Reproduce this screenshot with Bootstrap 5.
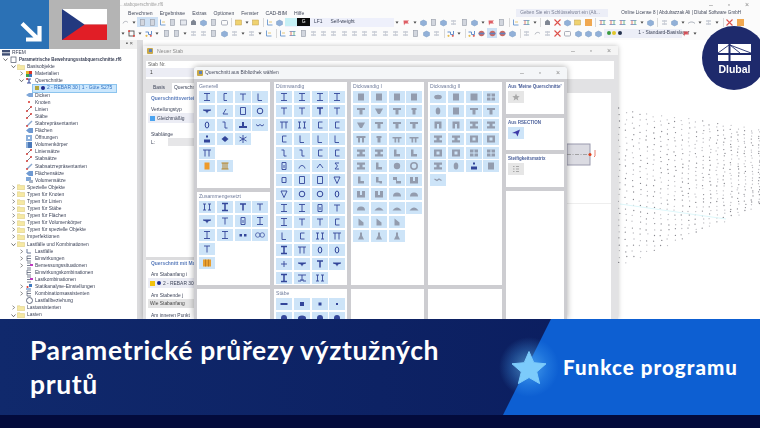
<!DOCTYPE html>
<html lang="cs">
<head>
<meta charset="UTF-8">
<title>Parametrické průřezy výztužných prutů</title>
<link href="https://cdn.jsdelivr.net/npm/bootstrap@5.3.0/dist/css/bootstrap.min.css" rel="stylesheet">
<script src="https://cdn.jsdelivr.net/npm/bootstrap@5.3.0/dist/js/bootstrap.bundle.min.js"></script>
<style>
html, body { margin: 0; width: 760px; height: 428px; overflow: hidden; background: #fff; }
.stage { width: 760px; height: 428px; }
.app { width: 760px; height: 319px; font-family: "Liberation Sans", Arial, sans-serif; font-size: 4.9px; line-height: 7.1px; color: #3c4358; filter: blur(.35px); background: #fff; }
.app svg { display: block; flex: none; }

/* title + menu + toolbars */
.appbar { height: 40px; background: #fbfbfb; }
.titlerow { height: 9px; padding-left: 120px; color: #a0a0a0; line-height: 10px; font-size: 4.5px; }
.winbtns { color: #8a8a8a; font-size: 7px; }
.winbtns span { width: 18px; text-align: center; }
.menurow { height: 8px; padding-left: 128px; line-height: 8px; color: #444a5c; font-size: 5.1px; }
.menurow span { margin-right: 7px; }
.search-box { margin-left: 205px; width: 92px; background: #eceef7; color: #7b8096; padding-left: 4px; margin-right: 13px; white-space: nowrap; overflow: hidden; font-size: 4.7px; }
.menurow .lic-text { font-size: 4.6px; white-space: nowrap; margin-right: 3px; }
.tools { height: 10px; padding-left: 120px; align-items: center; flex-wrap: nowrap; }
.tools.second { margin-top: 1px; }
.tb { width: 10.25px; height: 10px; display: flex; align-items: center; justify-content: center; flex: none; opacity: .85; }
.tb.on { background: #c5dcf3; }
.tb-c { width: 6.8px; height: 10px; display: flex; align-items: center; justify-content: center; flex: none; }
.tb-s { width: 4px; height: 9px; flex: none; }
.tb-s::after { content: ""; display: block; margin-left: 2px; width: 1px; height: 9px; background: #d8d8d8; }
.casebox { width: 109px; height: 9px; background: #eef0fb; flex: none; align-items: center; white-space: nowrap; }
.casebox i { display: block; width: 12px; height: 8px; background: #c6f0f5; }
.casebox b { display: block; width: 13px; height: 8px; background: #0b0b0b; color: #fff; font-weight: 400; text-align: center; line-height: 8px; }
.layerbox { width: 78px; height: 9px; background: #eceef7; flex: none; align-items: center; gap: 1.5px; padding-left: 3px; white-space: nowrap; }
.layerbox span { margin-left: 15px; }
.dotc { width: 4px; height: 4px; border-radius: 50%; flex: none; }
.dotc.sq { border-radius: 0; width: 5px; height: 5px; }

/* left tree */
.treepane { position: absolute; left: 0; top: 40px; width: 143px; height: 279px; background: #dcdcde; }
.treehead { height: 9px; background: #f0f0f0; width: 137px; color: #555; font-size: 6px; }
.treebody { width: 137px; height: 270px; background: #fff; overflow: hidden; }
.treeline { height: 7.1px; white-space: nowrap; align-items: center; }
.treeline .lbl { margin-left: 2px; }
.treeline .ico { width: 8px; margin-left: 1px; }
.treeline.proj .lbl { font-weight: 700; font-size: 4.5px; }
.treeline.sel span { color: #2f6fc0; }
.selbox { background: #cbe7fd; outline: 1px solid #8cc4ee; width: 83px; height: 7px; align-items: center; gap: 2px; padding-left: 2px; }
.chev { width: 5px; flex: none; }

/* windows */
.stabwin { position: absolute; left: 143px; top: 46px; width: 475px; height: 273px; background: #e2e2e4; box-shadow: 0 0 5px rgba(0,0,0,.25); overflow: hidden; }
.stabhead { height: 9px; background: #f4f4f4; padding-left: 4px; color: #8c8c8c; line-height: 10px; font-size: 5.2px; align-items: center; }
.stabtop { margin: 6px 4px 0 3px; height: 18px; background: #fff; padding-left: 2px; color: #666; }
.nrfield { width: 48px; height: 9px; background: #ecedf5; color: #333; padding-left: 4px; line-height: 9px; margin-left: -2px; }
.tabrow { margin: 4px 0 0 3px; height: 10px; align-items: stretch; line-height: 10px; }
.tabrow span { padding: 0 7px; }
.tabrow .act { background: #fff; padding: 0 2px; white-space: nowrap; }
.stabbody { margin-left: 3px; height: 226px; width: 465px; background: #fff; }
.leftcol { width: 48px; flex: none; white-space: nowrap; }
.leftup { height: 164px; padding: 2px 0 0 5px; }
.leftband { height: 3px; background: #dcdcde; }
.leftdown { padding-left: 5px; }
.sect-h { color: #5b7dbc; font-weight: 700; }
.sel-f { height: 10px; width: 48px; background: #ecedf5; align-items: center; gap: 2px; padding-left: 2px; margin-left: -3px; }
.gray-f { height: 9px; width: 48px; background: #e4e4e4; color: #444; padding-left: 2px; line-height: 9px; margin-left: -3px; }
.len-f { width: 30px; height: 8px; background: #e6e6e8; margin-left: 13px; }
.rightcol { margin-left: auto; width: 44px; }
.libwin { position: absolute; left: 194px; top: 67px; width: 373px; height: 252px; background: #cdcdd1; box-shadow: 0 0 6px rgba(0,0,0,.35); border-radius: 2px 2px 0 0; overflow: hidden; }
.libhead { height: 12px; background: #f4f6f8; padding-left: 3px; align-items: center; color: #4a4f60; font-size: 4.9px; gap: 2px; }
.libcols { gap: 4px; padding: 3px 0 0 3px; }
.libcol { width: 73px; gap: 4px; flex: none; }
.libcol.wide { width: 74px; }
.libcol.narrow { width: 58px; }
.libpanel { background: #fff; padding: 0 0 0 2px; flex: none; }
.libpanel h6 { font-size: 5.1px; line-height: 9px; height: 9px; margin: 0; color: #707c9c; font-weight: 400; white-space: nowrap; }
.libcol.narrow h6 { font-size: 4.5px; color: #4a5f9a; font-weight: 700; }
.tilegrid { display: grid; grid-template-columns: repeat(4, 16px); gap: 1.9px 1.75px; }
.tile { width: 16px; height: 12px; background: #cde4f8; }
.tile.off { background: #e6e6e6; }

/* mesh and logo */
.meshview { position: absolute; left: 618px; top: 100px; }
.flagblock { position: absolute; left: 0; top: 0; width: 120px; height: 49px; background: #b4b4b4; }
.arrowblock { width: 49px; height: 49px; background: #2b71b5; flex: none; }
.czflag { margin: 9px 0 0 13px; }
.logobadge { position: absolute; left: 702px; top: 26px; }

/* banner */
.bannerbar { height: 96px; position: relative; background: linear-gradient(90deg, #10296c, #0a1b5c); color: #fff; font-family: "Lato", "Liberation Sans", sans-serif; }
.slant { position: absolute; inset: 0; background: #0d5fd2; clip-path: polygon(551px 0, 760px 0, 760px 96px, 503px 96px); }
.bannertitle { position: relative; width: 495px; flex: none; padding-left: 30px; font-size: 26.5px; font-weight: 700; line-height: 34px; letter-spacing: .62px; }
.bannertag { position: relative; font-size: 20.5px; font-weight: 900; letter-spacing: 1.05px; white-space: nowrap; }
.starglow { width: 68px; height: 68px; flex: none; background: radial-gradient(circle closest-side, rgba(110,200,255,.6) 0, rgba(70,165,245,.28) 55%, rgba(40,120,230,0) 88%); }
.footstrip { height: 13px; background: #030b3c; }
</style>
</head>
<body>
<div class="stage d-flex flex-column">

  <div class="app position-relative overflow-hidden">
    <!-- app chrome -->
    <div class="appbar">
      <div class="titlerow d-flex justify-content-between">
        <span>...stabquerschnitte.rf6</span>
        <span class="winbtns d-flex me-1"><span>–</span><span>▫</span><span>×</span></span>
      </div>
      <div class="menurow d-flex">
        <span>Berechnen</span><span>Ergebnisse</span><span>Extras</span><span>Optionen</span><span>Fenster</span><span>CAD-BIM</span><span>Hilfe</span>
        <div class="search-box">Geben Sie ein Schlüsselwort ein (Alt...</div>
        <span class="lic-text">Online License 8 | Abdulrazzak Ali | Dlubal Software GmbH</span>
      </div>
      <div class="tools d-flex" id="row1"></div>
      <div class="tools second d-flex" id="row2"></div>
    </div>

    <!-- project tree -->
    <div class="treepane">
      <div class="treehead d-flex justify-content-end gap-2 pe-1">▪ ×</div>
      <div class="treebody" id="tree"></div>
    </div>

    <!-- mesh in the graphics area -->
    <svg class="meshview" id="mesh" width="142" height="175" viewBox="0 0 142 175"></svg>

    <!-- member dialog -->
    <div class="stabwin">
      <div class="stabhead d-flex justify-content-between">
        <span class="d-flex align-items-center gap-1"><svg width="6" height="6" viewBox="0 0 6 6"><rect width="6" height="6" rx="1" fill="#c9a94a"/><rect x="2" y="1" width="3" height="3" fill="#5c7fb8"/></svg>Neuer Stab</span>
        <span class="winbtns d-flex"><span>–</span><span>▫</span><span>×</span></span>
      </div>
      <div class="stabtop">
        <div>Stab Nr.</div>
        <div class="nrfield">1</div>
      </div>
      <div class="tabrow d-flex"><span>Basis</span><span class="act">Querschnitt</span></div>
      <div class="stabbody d-flex">
        <div class="leftcol">
          <div class="leftup">
            <div class="sect-h">Querschnittsverteilung</div>
            <div class="mt-1">Verteilungstyp</div>
            <div class="sel-f d-flex"><i class="dotc sq gleich"></i><span>Gleichmäßig</span></div>
            <div class="mt-2">Stablänge</div>
            <div class="d-flex align-items-center"><span>L:</span><div class="len-f"></div></div>
          </div>
          <div class="leftband"></div>
          <div class="leftdown">
            <div class="sect-h">Querschnitt mit Material</div>
            <div class="mt-1">Am Stabanfang i</div>
            <div class="sel-f d-flex"><i class="dotc sq yellowsq"></i><i class="dotc navydot"></i><span>2 - REBAR 30</span></div>
            <div class="mt-1">Am Stabende j</div>
            <div class="gray-f">Wie Stabanfang</div>
            <div class="mt-1">Am inneren Punkt</div>
          </div>
        </div>
        <div class="rightcol">
          <svg width="44" height="226" viewBox="0 0 44 226">
            <rect x="0" y="51" width="23" height="21" fill="#dbdbe2" stroke="#9a9aae"/>
            <path d="M0 61.5h22" stroke="#888" stroke-dasharray="4 1.5 1 1.5" stroke-width=".7"/>
            <circle cx="23" cy="61.5" r="1.5" fill="#e2401b"/>
            <path d="M28 57v6l-1 1" stroke="#e2604b" fill="none" stroke-width=".8"/>
            <path d="M0 110.5h44" stroke="#eee"/>
          </svg>
        </div>
      </div>
    </div>

    <!-- library dialog -->
    <div class="libwin">
      <div class="libhead d-flex">
        <svg width="6" height="6" viewBox="0 0 6 6"><rect width="6" height="6" rx="1" fill="#c9a94a"/><rect x="2" y="1" width="3" height="3" fill="#5c7fb8"/></svg>
        <span>Querschnitt aus Bibliothek wählen</span>
        <span class="winbtns d-flex ms-auto"><span>–</span><span>▫</span><span>×</span></span>
      </div>
      <div class="libcols d-flex" id="lib"></div>
    </div>

    <!-- badge blocks over the screenshot -->
    <div class="flagblock d-flex">
      <div class="arrowblock">
        <svg width="49" height="49" viewBox="0 0 49 49"><path d="M22 23.5 38 39M39.5 26v13.5H26" fill="none" stroke="#fff" stroke-width="4.2"/></svg>
      </div>
      <svg class="czflag" width="45" height="31" viewBox="0 0 45 31">
        <rect width="45" height="15.5" fill="#fff"/><rect y="15.5" width="45" height="15.5" fill="#e11e26"/><path d="M0 0 22.5 15.5 0 31z" fill="#23397f"/>
      </svg>
    </div>

    <svg class="logobadge" width="64" height="64" viewBox="0 0 64 64">
      <circle cx="32" cy="32" r="32" fill="#1e2a6c"/>
      <rect x="16" y="18" width="33" height="17" fill="#fff"/>
      <rect x="16" y="27" width="33" height="2" fill="#1e2a6c"/>
      <rect x="26.5" y="18" width="2" height="17" fill="#1e2a6c"/>
      <path d="M27 19 16 27M28 19 49 27M28 19 38 27" stroke="#1e2a6c" stroke-width=".9" fill="none"/>
      <text x="32.5" y="47" text-anchor="middle" fill="#fff" font-family="Liberation Sans, sans-serif" font-weight="700" font-size="10.5">Dlubal</text>
    </svg>
  </div>

  <!-- banner -->
  <div class="bannerbar d-flex align-items-center">
    <div class="slant"></div>
    <div class="bannertitle">Parametrické průřezy výztužných prutů</div>
    <div class="starglow d-flex align-items-center justify-content-center position-relative">
      <svg width="36" height="35" viewBox="0 0 36 35"><path d="M18 1.5 22.8 12.7 35 13.8 25.7 21.9 28.6 33.6 18 27.5 7.4 33.6 10.3 21.9 1 13.8 13.2 12.7z" fill="#7ccbfb" stroke="#7ccbfb" stroke-linejoin="round"/></svg>
    </div>
    <div class="bannertag">Funkce programu</div>
  </div>
  <div class="footstrip"></div>
</div>

<script>
// small toolbar glyphs, 8x8-ish in a 9 box
const toolGlyphs = {
  g: '<rect x="2.5" y="1.5" width="4" height="6" fill="#ccd0d9" stroke="#8d94a2" stroke-width=".7"/>',
  p: '<rect x="1.5" y="2" width="6" height="5" fill="#e2e5ec" stroke="#7d8494" stroke-width=".7"/>',
  d: '<path d="M2 7V3.5l2.5-2 2.5 2V7z" fill="#6a7282"/>',
  b: '<path d="M1.5 3.5 4.5 2l3 1.5v3L4.5 8l-3-1.5z" fill="#7fa3d2" stroke="#4f78ad" stroke-width=".4"/>',
  l: '<path d="M2.5 1.5v5.5h5" fill="none" stroke="#4f85c6" stroke-width=".9"/><path d="M4 4h3" stroke="#dcb040" stroke-width=".8"/>',
  r: '<path d="M1.5 2.5h5.5L5.5 4 7 5.5H3l-1 2z" fill="#d9424a"/>',
  y: '<rect x="1.5" y="2" width="6" height="5" fill="#eecb58" stroke="#b89030" stroke-width=".5"/>',
  o: '<rect x="1" y="1" width="7" height="7" fill="#ef9a34"/>',
  x: '<path d="M1.5 1.5l6 6M7.5 1.5l-6 6" stroke="#d8322a" stroke-width="1.1"/>',
  f: '<path d="M1.5 2.5h6M1.5 6.5h6" stroke="#4f7cbc" stroke-width=".8"/><path d="M3 2.5v4" stroke="#d4442c" stroke-width=".8"/><path d="M6 2.5v4" stroke="#3d9f55" stroke-width=".8"/>',
  m: '<path d="M1 5.5c2-2 5-2 7 0" stroke="#7e8696" stroke-width=".8" fill="none"/>',
  s: '<rect x="2" y="2" width="5" height="5" fill="none" stroke="#222" stroke-width=".8"/><rect x="1.2" y="1.2" width="1.8" height="1.8" fill="#d8322a"/><rect x="6" y="6" width="1.8" height="1.8" fill="#d8322a"/>',
  c: '<path d="M1.5 3h3v2.5h3V2" fill="none" stroke="#4c7fc4" stroke-width="1"/><circle cx="2.5" cy="6.8" r="1.1" fill="#e2b030"/><circle cx="6.8" cy="6.8" r="1.1" fill="#d84a42"/>',
  a: '<path d="M2 5.5a2.8 2.8 0 0 1 5-1" fill="none" stroke="#9a9fa9" stroke-width=".8"/>',
  t: '<path d="M2 3h5M2 6h5" stroke="#9aa2b2" stroke-width=".9"/><path d="M4.5 2v5" stroke="#c0c4ce" stroke-width=".8"/>',
  u: '<rect x="1.5" y="2.5" width="6" height="4.5" rx="1" fill="none" stroke="#858c9c" stroke-width=".8"/>',
  z: '<circle cx="4.5" cy="4.5" r="2.8" fill="#c55048"/><path d="M1.5 4.5h6" stroke="#4a6bb0" stroke-width="1.6"/>'
};
const caretSvg = '<svg width="4" height="3" viewBox="0 0 5 4"><path d="M.5.5h4L2.5 3.5z" fill="#444"/></svg>';
function svg9(inner) { return '<svg width="9" height="9" viewBox="0 0 9 9">' + inner + '</svg>'; }

function buildToolbar(id, spec) {
  const row = document.getElementById(id);
  for (const ch of spec) {
    const el = document.createElement('div');
    if (ch === '^') { el.className = 'tb-c'; el.innerHTML = caretSvg; }
    else if (ch === '|') { el.className = 'tb-s'; }
    else if (ch === '[') { el.className = 'tb on'; el.innerHTML = svg9(toolGlyphs.g); }
    else if (ch === ']') { el.className = 'tb on'; el.innerHTML = svg9(toolGlyphs.z); }
    else if (ch === 'C') { el.className = 'casebox d-flex'; el.innerHTML = '<i></i><b>G</b><span class="ms-1">LF1</span><span class="ms-2">Self-weight</span>'; }
    else if (ch === 'L') { el.className = 'layerbox d-flex'; el.innerHTML = '<i class="dotc" style="background:#3a9a3f"></i><i class="dotc" style="background:#e2c62a"></i><i class="dotc" style="background:#25324f"></i><span>1 - Standard-Basislayer</span>'; }
    else { el.className = 'tb'; el.innerHTML = svg9(toolGlyphs[ch]); }
    row.appendChild(el);
  }
}
buildToolbar('row1', 'a^[[lgpdbgu|y^y|lbC^r^bgbtgb^rg|lf^|dxbyo|ffff^b|tb^m^t^|xo');
buildToolbar('row2', '^s^c^gg^ttgbt^t^l|lfgttttttttttgbt|c^|cz]zb|tatxubbbLr^');

// tree rows: [left px, expander, icon, label]
const icoSvg = {
  F: '<svg width="8" height="6" viewBox="0 0 8 6"><path d="M.3.8h2.6l.7.8h4v4.1H.3z" fill="#f6e9a4" stroke="#d9c77c" stroke-width=".5"/></svg>',
  M: '<svg width="6" height="6" viewBox="0 0 6 6"><rect width="3" height="3" fill="#e8b22a"/><rect x="3" width="3" height="3" fill="#d8322a"/><rect y="3" width="3" height="3" fill="#3fa34d"/><rect x="3" y="3" width="3" height="3" fill="#3c78c0"/></svg>',
  Q: '<svg width="6" height="6" viewBox="0 0 6 6"><path d="M1 1h4M3 1v4M1 5h4" stroke="#3c50a0" stroke-width="1.2"/><circle cx="1" cy="1" r="1" fill="#d8322a"/></svg>',
  D: '<svg width="7" height="6" viewBox="0 0 7 6"><path d="M0 3l3-2h4v4H3z" fill="#7ea6d8"/></svg>',
  K: '<svg width="6" height="6" viewBox="0 0 6 6"><circle cx="3" cy="3" r="1" fill="#d8322a"/></svg>',
  L: '<svg width="6" height="6" viewBox="0 0 6 6"><path d="M.5 5.5l5-5" stroke="#5a6272" stroke-width=".8"/><circle cx="1" cy="5" r=".9" fill="#d8322a"/><circle cx="5" cy="1" r=".9" fill="#d8322a"/></svg>',
  R: '<svg width="7" height="7" viewBox="0 0 7 7"><path d="M1 6l5-5" stroke="#8aa8d0" stroke-width="1.4"/><circle cx="1" cy="6" r=".9" fill="#d8322a"/></svg>',
  A: '<svg width="7" height="5" viewBox="0 0 7 5"><path d="M0 2.5 3 0h4v5H3z" fill="#6f9ad2"/></svg>',
  O: '<svg width="6" height="6" viewBox="0 0 6 6"><rect width="6" height="6" fill="#8cb0dc"/><rect x="2" y="2" width="2" height="2" fill="#fff"/></svg>',
  V: '<svg width="6" height="6" viewBox="0 0 6 6"><rect width="6" height="6" fill="#4a78b8"/><rect width="2" height="6" fill="#8cb0dc"/></svg>',
  Z: '<svg width="7" height="6" viewBox="0 0 7 6"><rect width="5" height="4" fill="#7ea6d8"/><rect x="3" y="3" width="4" height="3" fill="#aab4c4"/></svg>',
  E: '<svg width="6" height="7" viewBox="0 0 6 7"><path d="M1 1h4M1 3.5h4M1 6h4" stroke="#3f4a63" stroke-width=".7"/><path d="M1 1v5" stroke="#3f4a63" stroke-width=".6"/></svg>',
  B: '<svg width="7" height="7" viewBox="0 0 7 7"><path d="M1 1h4M1 3.5h4M1 6h4" stroke="#3f4a63" stroke-width=".7"/><rect x="4" y="2" width="3" height="2" fill="#c03ac0"/></svg>',
  S: '<svg width="7" height="6" viewBox="0 0 7 6"><path d="M0 5h5" stroke="#3c78c0"/><rect x="3" y="0" width="3" height="3" fill="#3c78c0"/><circle cx="1.5" cy="3" r="1" fill="#d8322a"/></svg>',
  W: '<svg width="7" height="7" viewBox="0 0 7 7"><circle cx="3.5" cy="3.5" r="3" fill="none" stroke="#3f4a63" stroke-width=".8"/></svg>',
  H: '<svg width="6" height="6" viewBox="0 0 6 6"><path d="M1 1v4h4" stroke="#6a7a98" stroke-width="1" fill="none"/></svg>',
  P: '<svg width="7" height="7" viewBox="0 0 7 7"><rect x="1" y="1" width="5" height="5.5" fill="#fff" stroke="#4e5668" stroke-width=".7"/></svg>',
  T: '<svg width="8" height="6" viewBox="0 0 8 6"><rect width="8" height="2.4" fill="#3f4e73"/><rect y="3.2" width="8" height="2.4" fill="#3f4e73"/></svg>'
};
const treeItems = [
  [1, 'x', 'T', 'RFEM'], [3, 'v', 'P', 'Parametrische Bewehrungsstabquerschnitte.rf6'], [11, 'v', 'F', 'Basisobjekte'],
  [19, 'r', 'M', 'Materialien'], [19, 'v', 'Q', 'Querschnitte'], [33, 's', '', '2 - REBAR 30 | 1 - Güte S275'],
  [19, 'n', 'D', 'Dicken'], [19, 'n', 'K', 'Knoten'], [19, 'n', 'L', 'Linien'], [19, 'n', 'L', 'Stäbe'],
  [19, 'n', 'R', 'Stabrepräsentanten'], [19, 'n', 'A', 'Flächen'], [19, 'n', 'O', 'Öffnungen'], [19, 'n', 'V', 'Volumenkörper'],
  [19, 'n', 'L', 'Liniensätze'], [19, 'n', 'L', 'Stabsätze'], [19, 'n', 'R', 'Stabsatzrepräsentanten'], [19, 'n', 'A', 'Flächensätze'], [19, 'n', 'Z', 'Volumensätze'],
  [11, 'r', 'F', 'Spezielle Objekte'], [11, 'r', 'F', 'Typen für Knoten'], [11, 'r', 'F', 'Typen für Linien'], [11, 'r', 'F', 'Typen für Stäbe'],
  [11, 'r', 'F', 'Typen für Flächen'], [11, 'r', 'F', 'Typen für Volumenkörper'], [11, 'r', 'F', 'Typen für spezielle Objekte'], [11, 'r', 'F', 'Imperfektionen'],
  [11, 'v', 'F', 'Lastfälle und Kombinationen'], [19, 'r', 'H', 'Lastfälle'], [19, 'r', 'E', 'Einwirkungen'], [19, 'r', 'B', 'Bemessungssituationen'],
  [19, 'n', 'E', 'Einwirkungskombinationen'], [19, 'n', 'B', 'Lastkombinationen'], [19, 'r', 'S', 'Statikanalyse-Einstellungen'], [19, 'r', 'E', 'Kombinationsassistenten'],
  [19, 'n', 'W', 'Lastfallbeziehung'], [11, 'r', 'F', 'Lastassistenten'], [11, 'v', 'F', 'Lasten']
];
const expander = {
  r: '<svg class="chev" width="5" height="5" viewBox="0 0 5 5"><path d="M1.5.7 3.7 2.5 1.5 4.3" fill="none" stroke="#666" stroke-width=".7"/></svg>',
  v: '<svg class="chev" width="5" height="5" viewBox="0 0 5 5"><path d="M.5 1.5 2.5 3.7 4.5 1.5" fill="none" stroke="#333" stroke-width=".7"/></svg>',
  n: '<div class="chev"></div>',
  x: ''
};
const tree = document.getElementById('tree');
treeItems.forEach(([left, ex, ico, label], idx) => {
  const row = document.createElement('div');
  row.className = 'treeline d-flex' + (ex === 's' ? ' sel' : '') + (idx === 1 ? ' proj' : '');
  row.style.paddingLeft = left + 'px';
  if (ex === 's') {
    row.innerHTML = '<div class="selbox d-flex"><i class="dotc" style="background:#b2a53c;border-radius:0"></i><i class="dotc" style="background:#1e2a8c"></i><span>' + label + '</span></div>';
  } else {
    row.innerHTML = expander[ex] + '<div class="ico d-flex justify-content-center">' + icoSvg[ico] + '</div><span class="lbl">' + label + '</span>';
  }
  tree.appendChild(row);
});
document.querySelector('.gleich').style.background = '#4aa3ef';
document.querySelector('.yellowsq').style.background = '#f2c20c';
document.querySelector('.navydot').style.background = '#1e2a8c';

// cross-section glyphs for the 16x12 tiles
const N = '#33469a', G = '#939cae', TILE = '#cde4f8';
const st = (d, w) => '<path d="' + d + '" fill="none" stroke="' + N + '" stroke-width="' + (w || .9) + '"/>';
const fl = (d, c) => '<path d="' + d + '" fill="' + (c || G) + '"/>';
const tileGlyphs = {
  I: st('M5 2.5h6M8 2.5v7M5 9.5h6'), J: st('M5 2.5h6M8 2.5v7M5 9.5h6', 1.5), C: st('M10 2.5H7v7h3'), T: st('M5 3h6M8 3v6.5'), U: st('M5 3h6M8 3v6.5', 1.5),
  L: st('M6 2.5v7h4'), A: st('M6 9l3-5M6 9h5'), v: fl('M4 4.5h8v1l-3 1-1 2-1-2-3-1z', N), O: st('M5.5 2.5h5v7h-5z'), o: st('M6 3.5h4v5H6z'),
  R: '<circle cx="8" cy="6" r="2.8" fill="none" stroke="' + N + '"/>', e: '<ellipse cx="8" cy="6" rx="1.8" ry="3" fill="none" stroke="' + N + '"/>',
  Z: st('M5.5 3H8v6h2.5'), t: fl('M7 3h2v4h3v2H4V7h3z', N), w: st('M4 5.5l2 1.5 2-1.5 2 1.5 2-1.5'), d: fl('M7 2.5h2v2H7zM5 6.5h6v3H5z', N),
  D: fl('M8 3l3.5 3L8 9 4.5 6z', N), S: st('M8 2v8M4.5 4l7 4M11.5 4l-7 4'), H: st('M4 3h3M5.5 3v6M4 9h3M9 3h3M10.5 3v6M9 9h3'),
  P: st('M4 3h8M6 3v6.5M10 3v6.5'), c: st('M10.5 3h-4v6h4'), B: st('M6 2.5h4v7H6zM8 5v3'), n: st('M5 8.5c1-4 5-4 6 0'), a: st('M5 8l3-4 3 4'),
  E: st('M10 3H6l2.5 3L6 9h4'), V: st('M5 3h6L8 9.5z'), '+': st('M5 6h6M8 3v6'),
  X: st('M4 3h8M8 3v6M4 9h3V7M12 9H9V7'), '.': fl('M4.5 5H7v2.5H4.5zM9 5h2.5v2.5H9z', N), '8': st('M3.5 6a2.2 2.2 0 1 0 4.5 0 2.2 2.2 0 1 0-4.5 0M8 6a2.2 2.2 0 1 0 4.5 0 2.2 2.2 0 1 0-4.5 0', .7),
  '-': fl('M4.5 5h7v2h-7z', N), q: fl('M6 4h4v4H6z', N), r: fl('M6.5 4.5h3v3h-3z', N), p: fl('M7 5h2v2H7z', N),
  G: '<circle cx="8" cy="6" r="3" fill="' + N + '"/>', F: fl('M4 6a4 2.5 0 0 1 8 0v1H4z', N), y: fl('M5.5 2.5h5v7h-5z', '#ee9a2a'),
  k: fl('M4 2.5h8v7H4z', '#e9a030') + '<path d="M6.5 2.5v7M9.5 2.5v7" stroke="#b5701a" stroke-width=".7"/>',
  K: '<path d="M4.5 3h7M4.5 9h7M6 3v6M8 3v6M10 3v6" fill="none" stroke="#b5842a"/>',
  // thick sections, gray and filled
  '0': fl('M5 2.5h6v7H5z'), '1': fl('M4 3h8v2H9.5v4.5h-3V5H4z'), '2': fl('M4 3.5h8L9 9H7z'), '3': fl('M5.5 3h5v2h-1v4.5h-3V5h-1z'), '4': fl('M4 2.5h8v2.2H9.5v2.6H12v2.2H4V7.3h2.5V4.7H4z'),
  '5': '<circle cx="8" cy="6" r="3.2" fill="' + G + '"/>', '6': '<circle cx="8" cy="6" r="3.2" fill="none" stroke="' + G + '" stroke-width="1.6"/>', '7': fl('M5 2.5h2.5V7H11v2.5H5z'),
  '9': fl('M4 3h3v4h2V3h3v6.5H4z'), f: fl('M3.5 3h9v2H11v4.5H9V5H7v4.5H5V5H3.5z'), g: fl('M3.5 4h9v1.6h-2v3.9H8.8V5.6H7.2v3.9H5.5V5.6h-2z'), h: fl('M4 8.5a4 4 0 0 1 8 0z'), i: fl('M3.5 8.5c3-4 6-4 9 0z'),
  j: fl('M5.5 9.5v-7l5 4v3z'), l: fl('M7 2.5h2v3l2 4H5l2-4z'), m: fl('M5 3h2.5v4H11v2.5H8.5v-1H5z'), s: fl('M4 3h4v4h4v2.5H7V6H4z'),
  u: '<ellipse cx="8" cy="6" rx="3.8" ry="2.3" fill="' + G + '"/>', x: '<ellipse cx="8" cy="6" rx="2.3" ry="3.5" fill="' + G + '"/>',
  b: fl('M4.5 2.5h7v7h-7z'), M: fl('M4.5 2.5h7v7H9V5H7v4.5H4.5z'), W: fl('M4 2.5h8v7H4z') + '<rect x="6.5" y="4.5" width="3" height="3" fill="' + TILE + '"/>',
  Y: fl('M4 2.5h8v7H4z') + '<path d="M4 6h8M8 2.5v7" stroke="' + TILE + '"/>', '=': '<path d="M4.5 5 7 6.5l2-1.5 2.5 1.5" fill="none" stroke="' + G + '" stroke-width="1.2"/>'
};
function tilesHtml(rows) {
  let out = '';
  rows.forEach(row => {
    for (const ch of row) {
      out += ch === '_' ? '<div></div>' : '<div class="tile"><svg width="16" height="12" viewBox="0 0 16 12">' + tileGlyphs[ch] + '</svg></div>';
    }
  });
  return out;
}
function panel(title, h, rows) {
  return '<div class="libpanel" style="height:' + h + 'px"><h6>' + title + '</h6>' + (rows ? '<div class="tilegrid">' + tilesHtml(rows) + '</div>' : '') + '</div>';
}
const star = '<div class="tile off"><svg width="16" height="12" viewBox="0 0 16 12"><path d="M8 2.5l1 2.5 2.7.2-2 1.7.6 2.6L8 8l-2.3 1.5.6-2.6-2-1.7L7 5z" fill="#a9a9a9"/></svg></div>';
const rsect = '<div class="tile"><svg width="16" height="12" viewBox="0 0 16 12"><path d="M4 6 12 2.5 9.5 9.5 8 6.5z" fill="#3d3aa8"/></svg></div>';
const stiff = '<div class="tile off"><svg width="16" height="12" viewBox="0 0 16 12"><path d="M5 3.5h1.5M8 3.5h3M5 6h1.5M8 6h3M5 8.5h1.5M8 8.5h3" stroke="#a9a9a9"/></svg></div>';

document.getElementById('lib').innerHTML =
  '<div class="libcol d-flex flex-column">' +
    panel('Generell', 106, ['ICTL', 'vAOR', 'eZtw', 'dDS_', 'P___', 'yK__']) +
    panel('Zusammengesetzt', 93, ['HJUT', 'vTBI', 'II.8', 'T___', 'k___']) +
    panel('', 40) +
  '</div>' +
  '<div class="libcol d-flex flex-column">' +
    panel('Dünnwandig', 203, ['IIII', 'TTUT', 'PHcc', 'cLLL', 'ZZcc', 'BnaE', 'oOOV', 'VRRe', 'IIBT', 'ITTc', 'LcHP', 'JPee', '+vUv', 'JXH_']) +
    panel('Stäbe', 40, ['-qrp', 'GFGG']) +
  '</div>' +
  '<div class="libcol d-flex flex-column">' +
    panel('Dickwandig I', 203, ['0000', '1213', '2111', 'f3gg', '4477', '4756', '7ms9', '99hh', 'hiii', 'jjj_', 'lll_']) +
    panel('', 40) +
  '</div>' +
  '<div class="libcol wide d-flex flex-column">' +
    panel('Dickwandig II', 203, ['u0bY', 'x011', 'MM44', '44WW', 'WWYY', '4xd0', '=___']) +
    panel('', 40) +
  '</div>' +
  '<div class="libcol narrow d-flex flex-column">' +
    '<div class="libpanel" style="height:32px"><h6>Aus \'Meine Querschnitte\'</h6>' + star + '</div>' +
    '<div class="libpanel" style="height:32px"><h6>Aus RSECTION</h6>' + rsect + '</div>' +
    '<div class="libpanel" style="height:33px"><h6>Steifigkeitsmatrix</h6>' + stiff + '</div>' +
    panel('', 140) +
  '</div>';

// FE mesh dots in the graphics window (seeded so it stays the same every load)
let seed = 7;
const rnd = () => (seed = (seed * 16807) % 2147483647) / 2147483647;
let dots = '';
for (let i = 0; i < 21; i++) {
  const x = i * 7;
  const top = 9 + x * .148, bot = 166 - x * .43;
  for (let j = 0; j < 26; j++) {
    const v = (j + (i % 2) * .5) / 25.5;
    const y = top + (bot - top) * v + (rnd() - .5) * 2;
    const shade = rnd() > .55 ? '#85858c' : '#b8b8be';
    dots += '<circle cx="' + (x + (rnd() - .5) * 2 + 1).toFixed(1) + '" cy="' + y.toFixed(1) + '" r=".65" fill="' + shade + '"/>';
  }
}
dots += '<path d="M2 104 108 119" stroke="#dff8fb" stroke-width="1.2"/>';
document.getElementById('mesh').innerHTML = dots;
</script>
</body>
</html>
